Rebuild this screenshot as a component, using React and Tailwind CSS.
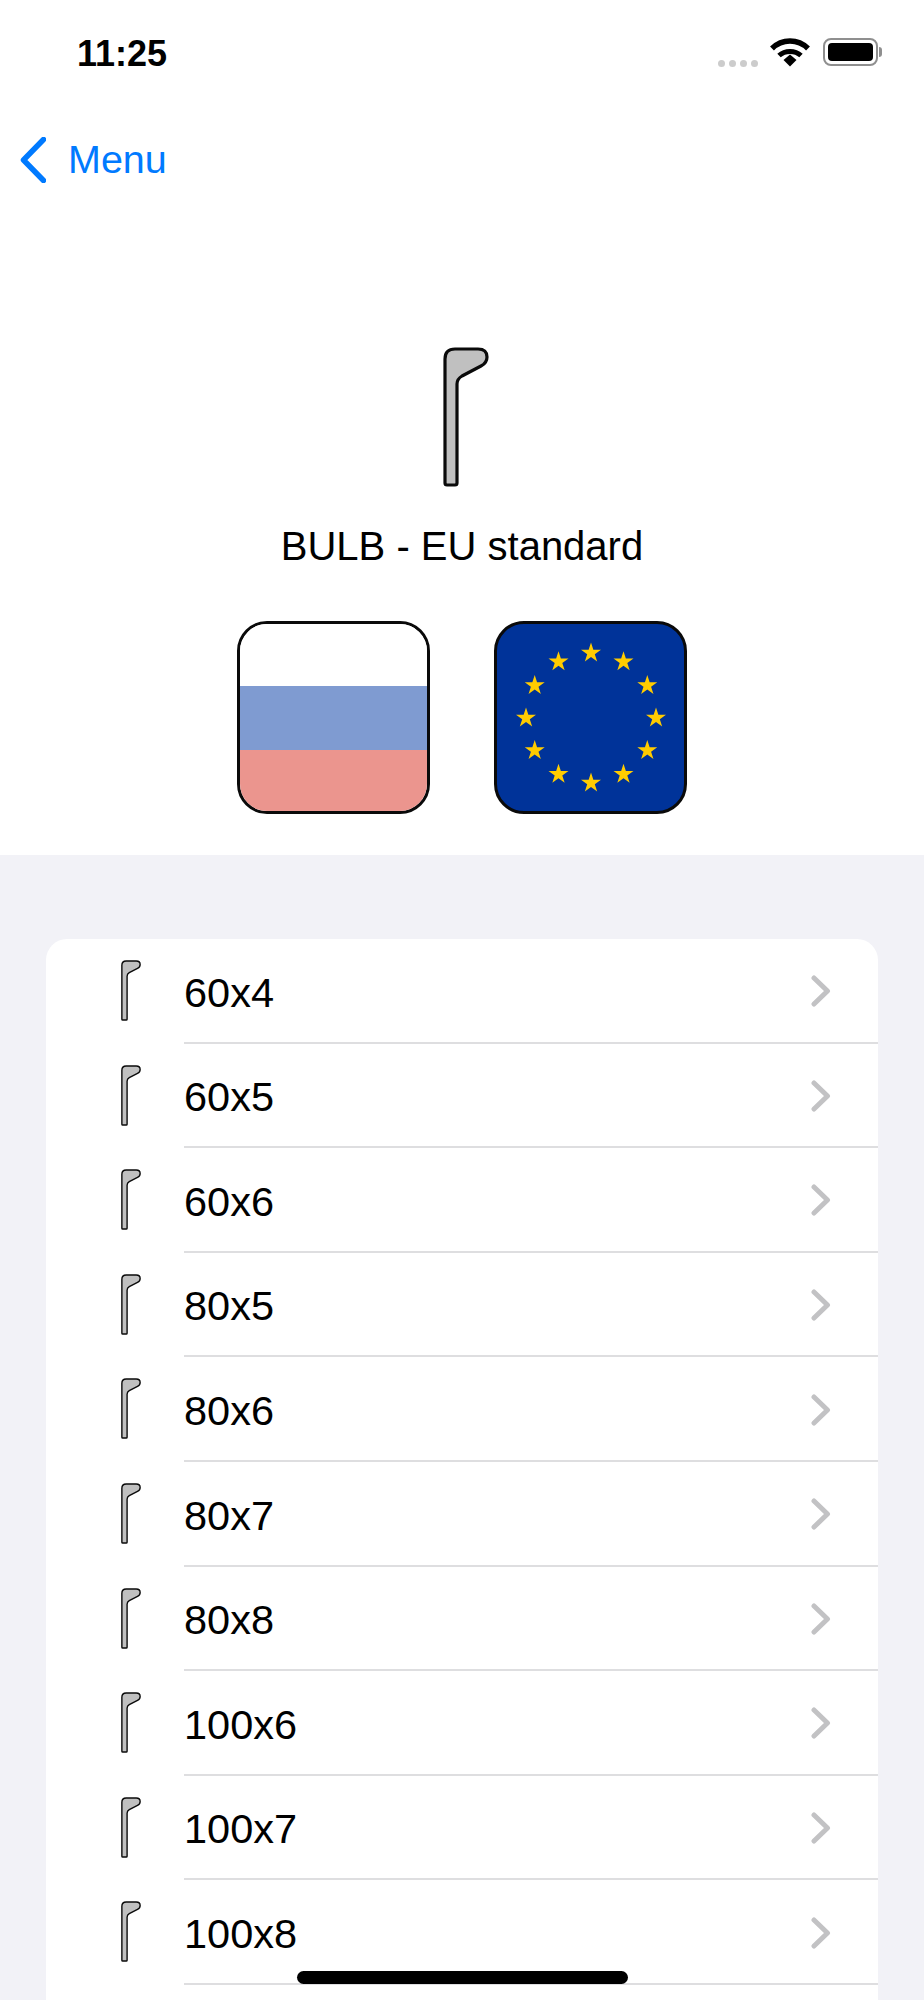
const SIZES = ["60x4","60x5","60x6","80x5","80x6","80x7","80x8","100x6","100x7","100x8"];

function Bulb({ className, sw }) {
  return (
    <svg viewBox="23 17 46 140" className={className} fill="none">
      <path d="M25 153V29Q25 19 35 19H58Q67 19 67 27Q67 33 61 36L42 46Q37 49 37 54V153Q37 155 35 155H27Q25 155 25 153Z" fill="#c0c0c0" stroke="#0a0a0a" strokeWidth={sw} strokeLinejoin="round" />
    </svg>
  );
}

function Star({ cx, cy }) {
  const pts = [];
  for (let i = 0; i < 10; i++) {
    const r = i % 2 === 0 ? 10.5 : 4.0;
    const a = -Math.PI / 2 + (i * Math.PI) / 5;
    pts.push(`${(cx + r * Math.cos(a)).toFixed(2)},${(cy + r * Math.sin(a)).toFixed(2)}`);
  }
  return <polygon points={pts.join(" ")} fill="#ffcc00" />;
}

function EuStars() {
  const stars = [];
  for (let i = 0; i < 12; i++) {
    const a = (i * Math.PI) / 6;
    stars.push(<Star key={i} cx={97 + 65 * Math.sin(a)} cy={97 - 65 * Math.cos(a)} />);
  }
  return <svg viewBox="0 0 192 192" className="absolute -left-[3px] -top-[3px] w-[192px] h-[192px]">{stars}</svg>;
}

function Row({ label }) {
  return (
    <div className="flex h-[104.6px] items-stretch">
      <div className="w-[138px] flex justify-end shrink-0">
        <div className="w-[63px] pt-[21px]">
          <Bulb className="w-[20px] h-[61px]" sw={3.2} />
        </div>
      </div>
      <div className="flex-1 flex items-center justify-between border-b-2 border-[#dedee0]">
        <span className="text-[41.5px] leading-none text-black pt-[4px]">{label}</span>
        <svg viewBox="0 0 20 32" className="w-[20px] h-[32px] mr-[47px] mt-[2px]" fill="none">
          <path d="M3 3L16.500 16L3 29" stroke="#c2c2c4" strokeWidth="5" strokeLinecap="round" strokeLinejoin="round" />
        </svg>
      </div>
    </div>
  );
}

export default function App() {
  return (
    <div className="relative h-[2000px] w-[924px] overflow-hidden flex flex-col bg-[#f2f2f7] font-['Liberation_Sans',Arial,sans-serif]">
      <header className="h-[855px] bg-white flex flex-col shrink-0">
        <div className="h-[124px] flex items-start justify-between pl-[77px] pr-[46px] pt-[34px] shrink-0">
          <span className="text-[36px] leading-[40px] font-bold text-black">11:25</span>
          <div className="flex items-center pt-[3px]">
            <div className="flex gap-[4px] mt-[23px] mr-[12px]">
              <span className="w-[7px] h-[7px] rounded-full bg-[#cccccc]" />
              <span className="w-[7px] h-[7px] rounded-full bg-[#cccccc]" />
              <span className="w-[7px] h-[7px] rounded-full bg-[#cccccc]" />
              <span className="w-[7px] h-[7px] rounded-full bg-[#cccccc]" />
            </div>
            <svg viewBox="0 0 40 30" className="w-[40px] h-[30px] mr-[13px]">
              <path d="M2 11.500C12 1.500 28 1.500 38 11.500" fill="none" stroke="#000" strokeWidth="5.500" />
              <path d="M9 18.500C15 13 25 13 31 18.500" fill="none" stroke="#000" strokeWidth="5" />
              <path d="M13.500 23L20 17.500L26.500 23L20 29.500Z" fill="#000" />
            </svg>
            <div className="relative w-[55px] h-[28px] rounded-[8px] border-2 border-[#8f8f8f] p-[3px]">
              <div className="w-full h-full rounded-[4px] bg-black" />
              <div className="absolute -right-[6px] top-[7px] w-[3px] h-[10px] rounded-r-[3px] bg-[#8f8f8f]" />
            </div>
          </div>
        </div>

        <div className="flex items-center h-[72px] pl-[20px] shrink-0">
          <svg viewBox="0 0 26 46" className="w-[26px] h-[46px]" fill="none">
            <path d="M23.500 2.500L3.500 23L23.500 43.500" stroke="#007aff" strokeWidth="5.500" strokeLinecap="round" strokeLinejoin="round" />
          </svg>
          <span className="text-[39.5px] leading-none text-[#007aff] ml-[22px]">Menu</span>
        </div>

        <div className="flex justify-center mt-[151px] pl-[8px] shrink-0">
          <Bulb className="w-[46px] h-[140px]" sw={3.2} />
        </div>
        <div className="text-center text-[40px] leading-[46px] text-black mt-[36px]">BULB - EU standard</div>
        <div className="flex justify-center gap-[64px] mt-[52px]">
          <div className="w-[193px] h-[193px] rounded-[30px] border-[3px] border-[#0a0a0a] overflow-hidden flex flex-col">
            <div className="h-[62px] bg-white" />
            <div className="h-[64px] bg-[#7f9bd1]" />
            <div className="flex-1 bg-[#eb958e]" />
          </div>
          <div className="relative w-[193px] h-[193px] rounded-[30px] border-[3px] border-[#0a0a0a] overflow-hidden bg-[#003399]">
            <EuStars />
          </div>
        </div>
      </header>

      <main className="flex-1 pt-[84px] pl-[46px] pr-[46px] flex flex-col">
        <div className="flex-1 bg-white rounded-t-[21px]">
          {SIZES.map((s) => <Row key={s} label={s} />)}
        </div>
      </main>

      <div className="absolute left-[297px] top-[1971px] w-[331px] h-[13px] rounded-full bg-black" />
    </div>
  );
}
